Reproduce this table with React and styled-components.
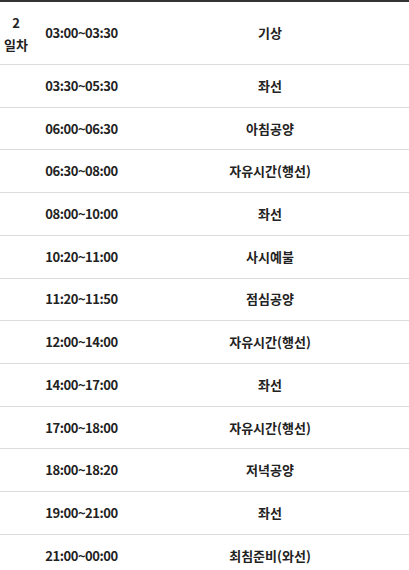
import React from "react";
import styled, { createGlobalStyle } from "styled-components";

const Global = createGlobalStyle`
  html, body { margin: 0; padding: 0; background: #fff; }
  body { font-family: "Noto Sans CJK KR", "Noto Sans", sans-serif; color: #222; }
`;

const Table = styled.div`
  width: 409px;
  border-top: 2px solid #333;
  background: #fff;
`;

const Row = styled.div`
  display: grid;
  grid-template-columns: 32px 99px 1fr;
  align-items: center;
  height: ${(p) => (p.$first ? "62px" : "41.73px")};
  border-bottom: 1px solid #dcdcdc;
`;

const Cell = styled.div`
  text-align: center;
  font-size: 13px;
  font-weight: 700;
  line-height: 22px;
  white-space: nowrap;
  letter-spacing: ${(p) => (p.$time ? "-0.45px" : "0")};
  padding-top: ${(p) => (p.$lead ? "2px" : "0")};
`;

const data = [
  ["03:00~03:30", "기상"],
  ["03:30~05:30", "좌선"],
  ["06:00~06:30", "아침공양"],
  ["06:30~08:00", "자유시간(행선)"],
  ["08:00~10:00", "좌선"],
  ["10:20~11:00", "사시예불"],
  ["11:20~11:50", "점심공양"],
  ["12:00~14:00", "자유시간(행선)"],
  ["14:00~17:00", "좌선"],
  ["17:00~18:00", "자유시간(행선)"],
  ["18:00~18:20", "저녁공양"],
  ["19:00~21:00", "좌선"],
  ["21:00~00:00", "최침준비(와선)"],
];

export default function App() {
  return (
    <>
      <Global />
      <Table>
        {data.map(([t, a], i) => (
          <Row key={i} $first={i === 0}>
            <Cell $lead={i === 0}>{i === 0 ? <>2<br />일차</> : null}</Cell>
            <Cell $time>{t}</Cell>
            <Cell>{a}</Cell>
          </Row>
        ))}
      </Table>
    </>
  );
}
